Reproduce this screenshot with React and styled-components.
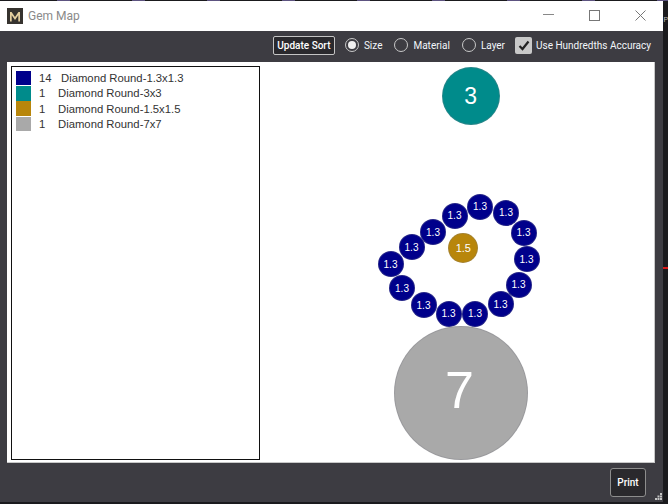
import React from "react";
import styled, { createGlobalStyle } from "styled-components";

const Global = createGlobalStyle`
  html, body {
    margin: 0;
    padding: 0;
    width: 668px;
    height: 504px;
    overflow: hidden;
    background: #1a1a1d;
  }
`;

const Desktop = styled.div`
  position: relative;
  width: 668px;
  height: 504px;
  padding-top: 1px;
  box-sizing: border-box;
  overflow: hidden;
  background: #1a1a1d;

  &::before {
    content: "";
    position: absolute;
    left: 0;
    right: 0;
    top: 0;
    height: 1px;
    background: repeating-linear-gradient(90deg, #1a1a1d 0 57px, #5d5480 57px 70px, #1a1a1d 70px 75px);
  }
`;
const RedTick = styled.i`
  position: absolute;
  left: 663px;
  top: 267px;
  width: 5px;
  height: 2px;
  background: #d81818;
`;
const BehindLetter = styled.span`
  position: absolute;
  left: 663.500px;
  top: 16px;
  font-family: "Liberation Sans", sans-serif;
  font-size: 7px;
  color: #bbb;
`;
const Window = styled.div`
  position: relative;
  display: flex;
  flex-direction: column;
  width: 663px;
  height: 501px;
  background: #3d3c42;
  font-family: Roboto, "Liberation Sans", sans-serif;
`;
const TitleBar = styled.header`
  display: flex;
  align-items: center;
  flex-shrink: 0;
  height: 30px;
  padding-left: 7px;
  background: #fff;
`;
const Logo = styled.div`
  display: flex;
  align-items: center;
  justify-content: center;
  width: 16px;
  height: 16px;
  margin-right: 5px;
  background: #36332f;
`;
const Title = styled.span`
  font-size: 12px;
  color: #8a8a8a;
`;
const WindowButtons = styled.div`
  display: flex;
  align-self: flex-start;
  margin-left: auto;
`;
const WindowButton = styled.div`
  display: flex;
  align-items: center;
  justify-content: center;
  width: 46px;
  height: 28px;
`;
const Toolbar = styled.div`
  display: flex;
  align-items: center;
  justify-content: flex-end;
  flex-shrink: 0;
  box-sizing: border-box;
  height: 31px;
  padding: 0 12px 3px 0;
  color: #f2f6fa;
  font-size: 10px;
`;
const SortButton = styled.button`
  width: 62px;
  height: 19px;
  padding: 0;
  margin-right: 10px;
  border: 1px solid #c4c4c4;
  border-radius: 2px;
  background: #2a292d;
  color: #fff;
  font: inherit;
  font-weight: 500;
`;
const Radio = styled.label`
  display: flex;
  align-items: center;
  gap: 5px;
  margin-right: ${({ $gap }) => $gap}px;
`;
const RadioDot = styled.span`
  display: flex;
  align-items: center;
  justify-content: center;
  box-sizing: border-box;
  width: 14px;
  height: 14px;
  border: 1px solid #c8c8c8;
  border-radius: 50%;

  &::after {
    content: "";
    width: 8px;
    height: 8px;
    border-radius: 50%;
    background: ${({ $checked }) => ($checked ? "#f0f0f0" : "transparent")};
  }
`;
const Check = styled.label`
  display: flex;
  align-items: center;
  gap: 4px;
`;
const CheckBox = styled.span`
  display: flex;
  align-items: center;
  justify-content: center;
  width: 17px;
  height: 17px;
  border-radius: 2px;
  background: #c9c9c9;
`;
const Content = styled.main`
  position: relative;
  display: flex;
  flex: 1;
  min-height: 0;
  margin: 0 8px 0 7px;
  padding: 4px 0 2px 4px;
  background: #fff;
  border-right: 1px solid #c8c8c8;
  border-bottom: 1px solid #c8c8c8;
`;
const Legend = styled.ul`
  box-sizing: border-box;
  width: 249px;
  height: 100%;
  margin: 0;
  padding: 3.500px 0 0 4px;
  list-style: none;
  border: 1px solid #111;
  font-family: "Liberation Sans", Arial, sans-serif;
  font-size: 11.300px;
  color: #333;
`;
const LegendRow = styled.li`
  display: flex;
  align-items: center;
  height: 15.300px;
`;
const Swatch = styled.i`
  flex-shrink: 0;
  width: 15px;
  height: 14.500px;
  margin-right: 8px;
  background: ${({ color }) => color};
`;
const Count = styled.span`
  width: ${({ $wide }) => ($wide ? 22 : 19)}px;
`;
const Gem = styled.div`
  position: absolute;
  left: ${({ $x, $d }) => $x - 7 - $d / 2}px;
  top: ${({ $y, $d }) => $y - 62 - $d / 2}px;
  width: ${({ $d }) => $d}px;
  height: ${({ $d }) => $d}px;
  display: flex;
  align-items: center;
  justify-content: center;
  padding: 0 ${({ $nudge }) => ($nudge ? 3 : 0)}px ${({ $nudge }) => ($nudge ? 6 : 0)}px 0;
  border-radius: 50%;
  box-sizing: border-box;
  background: ${({ color }) => color};
  border: 1px solid rgba(120, 120, 130, 0.3);
  color: #fff;
  font-family: "Liberation Sans", Arial, sans-serif;
  font-size: ${({ $fs }) => $fs}px;
`;
const Footer = styled.footer`
  display: flex;
  justify-content: flex-end;
  align-items: flex-start;
  flex-shrink: 0;
  box-sizing: border-box;
  height: 39px;
  padding: 5px 17px 0 0;
`;
const PrintButton = styled.button`
  width: 36px;
  height: 29px;
  padding: 0;
  border: 1px solid #8d8d8d;
  border-radius: 3px;
  background: #2a292d;
  color: #fff;
  font: inherit;
  font-size: 10px;
  font-weight: 500;
`;
const Grip = styled.svg`
  position: absolute;
  right: 1px;
  bottom: 2px;
`;

const legend = [
  { color: "#00008b", count: "14", wide: true, name: "Diamond Round-1.3x1.3" },
  { color: "#008b8b", count: "1", name: "Diamond Round-3x3" },
  { color: "#b8860b", count: "1", name: "Diamond Round-1.5x1.5" },
  { color: "#a9a9a9", count: "1", name: "Diamond Round-7x7" }
];

const ring = [
  [480, 206.5], [506, 212.5], [523.5, 232.5], [526.5, 259], [518.5, 284.5],
  [500.5, 304], [475, 313.5], [448.5, 313.5], [423.5, 305], [402, 288],
  [390.5, 264], [411.5, 247], [433, 232], [454.5, 215.5]
];

const App = () => (
  <Desktop>
    <Global />
    <RedTick />
    <BehindLetter>P</BehindLetter>
    <Window>
      <TitleBar>
        <Logo>
          <svg width="12" height="11" viewBox="0 0 12 11">
            <path d="M1 10.5V1h1.6L6 6l3.4-5H11v9.500H9.300V4.200L6 9 2.700 4.200v6.300z" fill="#e4cf9f" />
          </svg>
        </Logo>
        <Title>Gem Map</Title>
        <WindowButtons>
          <WindowButton>
            <svg width="11" height="2"><path d="M0 .5h11" stroke="#888" /></svg>
          </WindowButton>
          <WindowButton>
            <svg width="11" height="11"><rect x=".5" y=".5" width="10" height="10" fill="none" stroke="#777" /></svg>
          </WindowButton>
          <WindowButton>
            <svg width="11" height="11"><path d="M.5.5l10 10M10.500.5l-10 10" stroke="#777" /></svg>
          </WindowButton>
        </WindowButtons>
      </TitleBar>
      <Toolbar>
        <SortButton>Update Sort</SortButton>
        <Radio $gap={12}><RadioDot $checked />Size</Radio>
        <Radio $gap={12}><RadioDot />Material</Radio>
        <Radio $gap={10}><RadioDot />Layer</Radio>
        <Check>
          <CheckBox>
            <svg width="12" height="11" viewBox="0 0 12 11">
              <path d="M1.500 6l3 3L10.500 1.500" fill="none" stroke="#222" strokeWidth="2.200" />
            </svg>
          </CheckBox>
          Use Hundredths Accuracy
        </Check>
      </Toolbar>
      <Content>
        <Legend>
          {legend.map(item => (
            <LegendRow key={item.name}>
              <Swatch color={item.color} />
              <Count $wide={item.wide}>{item.count}</Count>
              {item.name}
            </LegendRow>
          ))}
        </Legend>
        <Gem $x={470.7} $y={96} $d={58} $fs={23} color="#008b8b">3</Gem>
        {ring.map(([x, y]) => (
          <Gem key={x} $x={x} $y={y} $d={26} $fs={10} color="#00008b">1.3</Gem>
        ))}
        <Gem $x={463.3} $y={248.3} $d={30} $fs={11} color="#b8860b">1.5</Gem>
        <Gem $x={461} $y={393} $d={134} $fs={52} $nudge color="#a9a9a9">7</Gem>
      </Content>
      <Footer>
        <PrintButton>Print</PrintButton>
      </Footer>
      <Grip width="7" height="7" viewBox="0 0 7 7">
        <path d="M5 0h2v2H5zM2.500 2.500h2v2h-2zM5 2.500h2v2H5zM0 5h2v2H0zM2.500 5h2v2h-2zM5 5h2v2H5z" fill="#c4c4c4" />
      </Grip>
    </Window>
  </Desktop>
);

export default App;
